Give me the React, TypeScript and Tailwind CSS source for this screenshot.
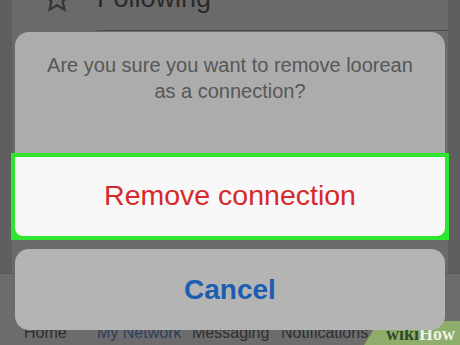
import React from 'react';

const StarOutline: React.FC = () => (
  <svg width="30" height="30" viewBox="0 0 24 24" fill="none" stroke="#353535" strokeWidth="1.8" strokeLinejoin="miter">
    <path d="M12 2.5l2.9 6.2 6.6.7-5 4.5 1.4 6.6L12 17.1l-5.9 3.4 1.4-6.6-5-4.5 6.6-.7z" />
  </svg>
);

const App: React.FC = () => {
  return (
    <div
      className="relative w-[460px] h-[345px] overflow-hidden bg-[#5f5f5f]"
      style={{ fontFamily: '"Liberation Sans", Arial, sans-serif' }}
    >
      {/* dimmed app screen behind the sheet */}
      <div className="ml-[12px] w-[436px] h-full bg-[#6a6a6a] flex flex-col">
        <div className="flex items-start h-[31px] border-b border-[#4c4c4c] ml-[85px]">
          <span className="text-[27px] leading-[26px] text-[#2a2a2a] -mt-[15px]">Following</span>
        </div>
        <div className="absolute left-[42px] -top-[16px]">
          <StarOutline />
        </div>
        <div className="flex-1" />
        <div className="h-[72px] border-t border-[#5a5a5a] bg-[#6c6c6c] -ml-[12px] w-[460px] flex items-end pl-[24px]">
          <div className="flex text-[16px] leading-[20px] mb-[2px]">
            <span className="w-[73px] text-[#2f2f2f]">Home</span>
            <span className="w-[95px] text-[#2d405c]">My Network</span>
            <span className="w-[89px] text-[#2f2f2f]">Messaging</span>
            <span className="text-[#2f2f2f]">Notifications</span>
          </div>
        </div>
      </div>

      {/* wikiHow watermark */}
      <div className="absolute right-0 bottom-0 w-[96px] h-[24px]">
        <svg width="96" height="24" viewBox="0 0 96 24" className="absolute inset-0">
          <polygon points="15,0 96,0 96,24 0,24" fill="#8fae6b" />
        </svg>
        <div
          className="absolute left-[22px] top-[3px] text-[18px] leading-[20px] font-bold"
          style={{ fontFamily: '"Liberation Serif", "Times New Roman", serif' }}
        >
          <span className="text-[#2e4a2a]">wiki</span>
          <span className="text-[#eef2e6]">How</span>
        </div>
      </div>

      {/* action sheet */}
      <div className="absolute inset-0 flex flex-col px-[15px] pt-[32px]">
        <div className="rounded-t-[14px] bg-[#acacac] flex flex-col">
          <div className="h-[121px] pt-[20px] px-[20px] text-center text-[20px] leading-[26px] text-[#575757]">
            Are you sure you want to remove loorean
            <br />
            as a connection?
          </div>
          <div className="-mx-[4px] border-[4px] border-[#30e530] bg-[#30e530]">
            <div className="h-[79px] bg-[#f8f8f8] rounded-b-[8px] flex items-center justify-center">
              <span className="text-[28.5px] text-[#d42a2a] pb-[2px]">Remove connection</span>
            </div>
          </div>
        </div>
        <div className="mt-[9px] h-[81px] rounded-[14px] bg-[#b4b4b4] flex items-center justify-center">
          <span className="text-[28px] font-bold text-[#1b5db3]">Cancel</span>
        </div>
      </div>
    </div>
  );
};

export default App;
